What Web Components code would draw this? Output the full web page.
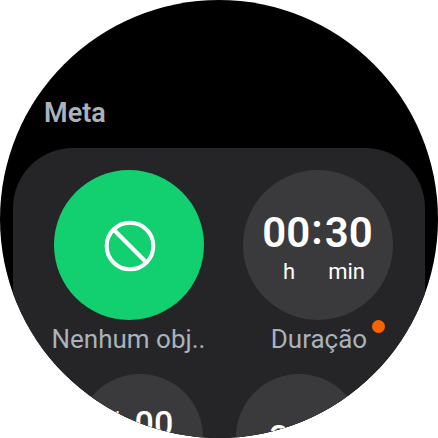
<!DOCTYPE html>
<html lang="pt">
<head>
<meta charset="utf-8">
<meta name="viewport" content="width=device-width, initial-scale=1">
<title>Meta</title>
<style>
body { margin: 0; background: #fff; font-family: Roboto, "Noto Sans", sans-serif; }
</style>
</head>
<body>
<watch-screen>
  <h1 slot="title">Meta</h1>
  <goal-panel>
    <goal-row>
      <goal-option selected>
        <no-goal-icon></no-goal-icon>
        <span slot="label">Nenhum obj..</span>
      </goal-option>
      <goal-option notify>
        <goal-value>00<i>:</i>30<span slot="units">h</span><span slot="units">min</span></goal-value>
        <span slot="label">Duração</span>
      </goal-option>
    </goal-row>
    <goal-row small>
      <goal-option small>
        <goal-value small>1.00</goal-value>
      </goal-option>
      <goal-option small>
        <goal-value small low>300</goal-value>
      </goal-option>
    </goal-row>
  </goal-panel>
</watch-screen>
<script>
const define = (name, html) => {
  const template = document.createElement('template');
  template.innerHTML = html;
  customElements.define(name, class extends HTMLElement {
    constructor() {
      super();
      this.attachShadow({ mode: 'open' }).append(template.content.cloneNode(true));
    }
  });
};

define('watch-screen', `
  <style>
    :host { display: flex; flex-direction: column; box-sizing: border-box; width: 100%; aspect-ratio: 1;
      padding: 98px 13px 0; background: #000; border-radius: 50%; overflow: hidden; }
    ::slotted(h1) { margin: 0 0 20px 31px; color: #a9b2bd; font-size: 27px; line-height: 30px; font-weight: 600; }
  </style>
  <slot name="title"></slot>
  <slot></slot>`);

define('goal-panel', `
  <style>
    :host { display: flex; flex: none; flex-direction: column; gap: 20px;
      padding: 22px 0 40px; background: #252527; border-radius: 60px; }
  </style>
  <slot></slot>`);

define('goal-row', `
  <style>
    :host { display: flex; justify-content: center; gap: 33px; padding-left: 8px; }
    :host([small]) { padding-left: 0; }
  </style>
  <slot></slot>`);

define('goal-option', `
  <style>
    :host { display: block; width: 156px; --face: #3a3a3c; --size: 150px; }
    :host([selected]) { --face: #12d070; }
    :host([small]) { --size: 126px; width: 126px; }
    button { position: relative; display: flex; flex-direction: column; align-items: center; gap: 4px;
      width: 100%; padding: 0; border: 0; background: none; color: #a9b2bd; font: 26px/30px Roboto, "Noto Sans", sans-serif; white-space: nowrap; }
    .face { display: flex; align-items: center; justify-content: center; width: var(--size);
      height: var(--size); border-radius: 50%; background: var(--face); color: #fff; }
    .dot { display: none; position: absolute; right: 11px; bottom: 21px; width: 13px; height: 13px;
      border-radius: 50%; background: #fa6400; }
    :host([notify]) .dot { display: block; }
    :host([notify]) .label { padding-left: 3px; }
  </style>
  <button type="button">
    <span class="face"><slot></slot></span>
    <span class="label"><slot name="label"></slot></span>
    <span class="dot"></span>
  </button>`);

define('no-goal-icon', `
  <style>
    :host { display: block; padding: 2px 0 0 2px; }
    svg { display: block; width: 52px; height: 52px; fill: none; stroke: #fff; stroke-width: 4; }
  </style>
  <svg viewBox="0 0 52 52" aria-hidden="true"><circle cx="26" cy="26" r="23.3"/><path d="M10 10 42 42"/></svg>`);

define('goal-value', `
  <style>
    :host { display: flex; flex-direction: column; align-items: center; color: #fff; }
    .number { display: flex; font-size: 42px; line-height: 48px; font-weight: 600; }
    .units { display: flex; gap: 33px; padding-left: 13px; font-size: 22px; line-height: 30px; }
    :host(:not([small])) { padding-top: 6px; }
    :host([small]) .number { font-size: 34px; line-height: 36px; font-weight: 500; }
    :host([small]) { padding-bottom: 28px; }
    :host([low]) { padding-bottom: 0; }
    ::slotted(i) { font-style: normal; line-height: 42px; padding: 0 2px 0 1px; }
  </style>
  <span class="number"><slot></slot></span>
  <span class="units"><slot name="units"></slot></span>`);
</script>
</body>
</html>
